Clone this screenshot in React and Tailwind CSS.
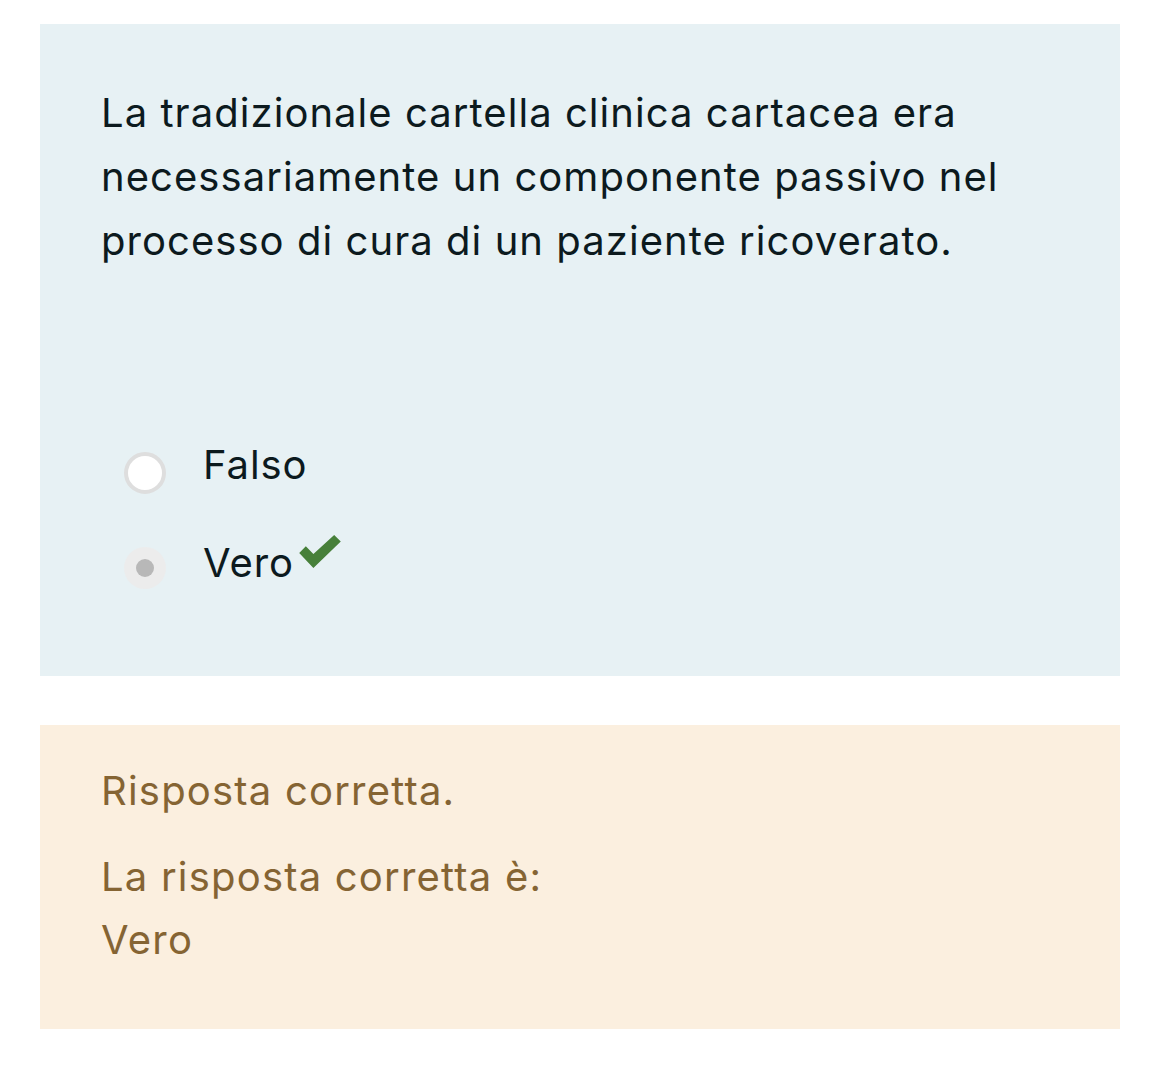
import React from 'react';

const font = { fontFamily: 'Inter, "Noto Sans", sans-serif' };

const Check = () => (
  <svg viewBox="0 0 48 36" className="w-[48px] h-[34px] ml-[2px] -mt-[22px]" aria-hidden="true">
    <path d="M2 19 L9 12 L17 20 L39 0 L46 7 L17 35 Z" fill="#47803a" />
  </svg>
);

const Option = ({ label, checked, correct }) => (
  <div className="flex items-center h-[64px]">
    {checked ? (
      <span className="w-[42px] h-[42px] rounded-full bg-[#ececec] flex items-center justify-center mt-[10px]">
        <span className="w-[18px] h-[18px] rounded-full bg-[#b8b8b8]" />
      </span>
    ) : (
      <span className="w-[42px] h-[42px] rounded-full bg-white border-[4px] border-[#dedede] mt-[16px]" />
    )}
    <span className="ml-[37px] text-[40px] leading-[64px] tracking-[0.9px] text-[#0c1a1e]">{label}</span>
    {correct && <Check />}
  </div>
);

export default function App() {
  return (
    <div className="bg-white min-h-[1065px] pt-[24px] pl-[40px] pr-[45px] pb-[36px]" style={font}>
      <div className="bg-[#e7f1f4] pt-[57px] pb-[81px] px-[61px]">
        <p className="text-[40px] leading-[64px] text-[#0c1a1e] tracking-[1.05px]">
          La tradizionale cartella clinica cartacea era necessariamente un componente passivo nel processo di cura di un paziente ricoverato.
        </p>
        <div className="mt-[160px] ml-[23px] flex flex-col gap-[34px]">
          <Option label="Falso" />
          <Option label="Vero" checked correct />
        </div>
      </div>
      <div className="mt-[49px] bg-[#fbefdf] pt-[34px] pb-[58px] px-[61px] text-[#856433] text-[40px] tracking-[1.2px]">
        <p className="leading-[64px]">Risposta corretta.</p>
        <p className="mt-[22px] leading-[63px]">La risposta corretta è:</p>
        <p className="leading-[63px]">Vero</p>
      </div>
    </div>
  );
}
